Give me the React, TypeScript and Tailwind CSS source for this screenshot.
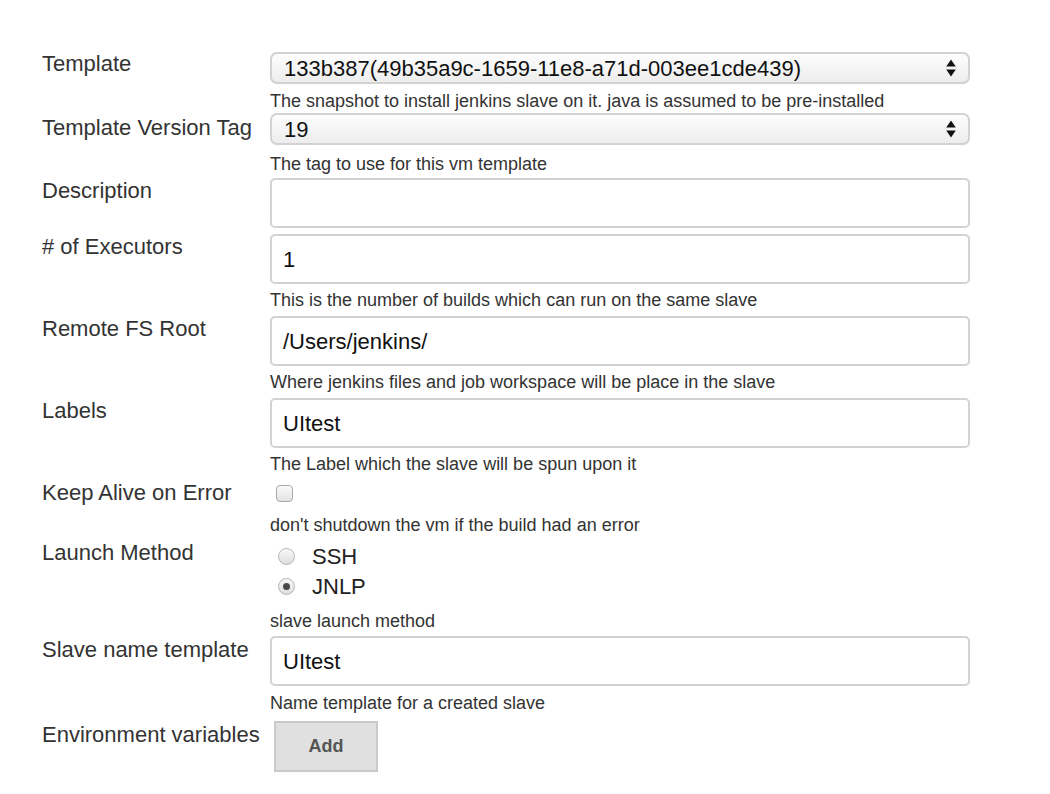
import React from 'react';

const font = { fontFamily: '"Liberation Sans", Arial, Helvetica, sans-serif' };

const SelectArrows = () => (
  <svg width="10" height="18" viewBox="0 0 10 18" className="shrink-0">
    <path d="M5 0.5 L9.8 7.5 L0.2 7.5 Z" fill="#111" />
    <path d="M5 17.5 L9.8 10.5 L0.2 10.5 Z" fill="#111" />
  </svg>
);

const Label = ({ children, pad }: { children: React.ReactNode; pad: string }) => (
  <div className={`w-[228px] shrink-0 whitespace-nowrap text-[22px] leading-[24px] text-[#333] ${pad}`}>{children}</div>
);

const Help = ({ children, mt }: { children: React.ReactNode; mt: string }) => (
  <div className={`ml-[228px] text-[18px] leading-[20px] text-[#333] ${mt}`}>{children}</div>
);

const SelectBox = ({ value }: { value: string }) => (
  <div className="w-[700px] h-[32px] flex items-center justify-between pl-[12px] pr-[12px] rounded-[7px] border-2 border-[#d2d2d2] bg-gradient-to-b from-[#fdfdfd] to-[#ededed] text-[22px] text-[#111]">
    <span>{value}</span>
    <SelectArrows />
  </div>
);

const TextBox = ({ value }: { value?: string }) => (
  <div className="w-[700px] h-[50px] flex items-center pl-[11px] rounded-[5px] border-2 border-[#d2d2d2] bg-white text-[22px] text-[#111]">
    {value}
  </div>
);

const Radio = ({ checked }: { checked?: boolean }) => (
  <span className="w-[17px] h-[17px] rounded-full border border-[#b4b4b4] bg-gradient-to-b from-[#f8f8f8] to-[#dedede] flex items-center justify-center shrink-0">
    {checked && <span className="w-[7px] h-[7px] rounded-full bg-[#4a4a4a]" />}
  </span>
);

export default function App() {
  return (
    <div className="min-h-screen bg-white" style={font}>
      <div className="pt-[52px] pl-[42px]">
        <div className="flex items-start">
          <Label pad="pt-0">Template</Label>
          <SelectBox value="133b387(49b35a9c-1659-11e8-a71d-003ee1cde439)" />
        </div>
        <Help mt="mt-[7px]">The snapshot to install jenkins slave on it. java is assumed to be pre-installed</Help>

        <div className="flex items-start mt-[2px]">
          <Label pad="pt-[3px]">Template Version Tag</Label>
          <SelectBox value="19" />
        </div>
        <Help mt="mt-[9px]">The tag to use for this vm template</Help>

        <div className="flex items-start mt-[4px]">
          <Label pad="pt-[1px]">Description</Label>
          <TextBox />
        </div>

        <div className="flex items-start mt-[6px]">
          <Label pad="pt-[1px]"># of Executors</Label>
          <TextBox value="1" />
        </div>
        <Help mt="mt-[6px]">This is the number of builds which can run on the same slave</Help>

        <div className="flex items-start mt-[6px]">
          <Label pad="pt-[1px]">Remote FS Root</Label>
          <TextBox value="/Users/jenkins/" />
        </div>
        <Help mt="mt-[6px]">Where jenkins files and job workspace will be place in the slave</Help>

        <div className="flex items-start mt-[6px]">
          <Label pad="pt-[1px]">Labels</Label>
          <TextBox value="UItest" />
        </div>
        <Help mt="mt-[6px]">The Label which the slave will be spun upon it</Help>

        <div className="flex items-start mt-[7px]">
          <Label pad="pt-0">Keep Alive on Error</Label>
          <span className="mt-[4px] ml-[6px] w-[17px] h-[17px] rounded-[4px] border border-[#a8a8a8] bg-gradient-to-b from-[#fbfbfb] to-[#e2e2e2]" />
        </div>
        <Help mt="mt-[10px]">don't shutdown the vm if the build had an error</Help>

        <div className="flex items-start mt-[6px]">
          <Label pad="pt-0">Launch Method</Label>
          <div className="flex flex-col pl-[8px]">
            <div className="h-[30px] flex items-center gap-[17px] text-[22px] text-[#222]">
              <Radio />
              <span>SSH</span>
            </div>
            <div className="h-[31px] flex items-center gap-[17px] text-[22px] text-[#222]">
              <Radio checked />
              <span>JNLP</span>
            </div>
          </div>
        </div>
        <Help mt="mt-[9px]">slave launch method</Help>

        <div className="flex items-start mt-[5px]">
          <Label pad="pt-[2px]">Slave name template</Label>
          <TextBox value="UItest" />
        </div>
        <Help mt="mt-[7px]">Name template for a created slave</Help>

        <div className="flex items-start mt-[8px]">
          <Label pad="pt-[2px]">Environment variables</Label>
          <button className="ml-[4px] w-[104px] h-[51px] bg-[#e0e0e0] border-2 border-[#c9c9c9] text-[18px] font-bold text-[#555]">
            Add
          </button>
        </div>
      </div>
    </div>
  );
}
